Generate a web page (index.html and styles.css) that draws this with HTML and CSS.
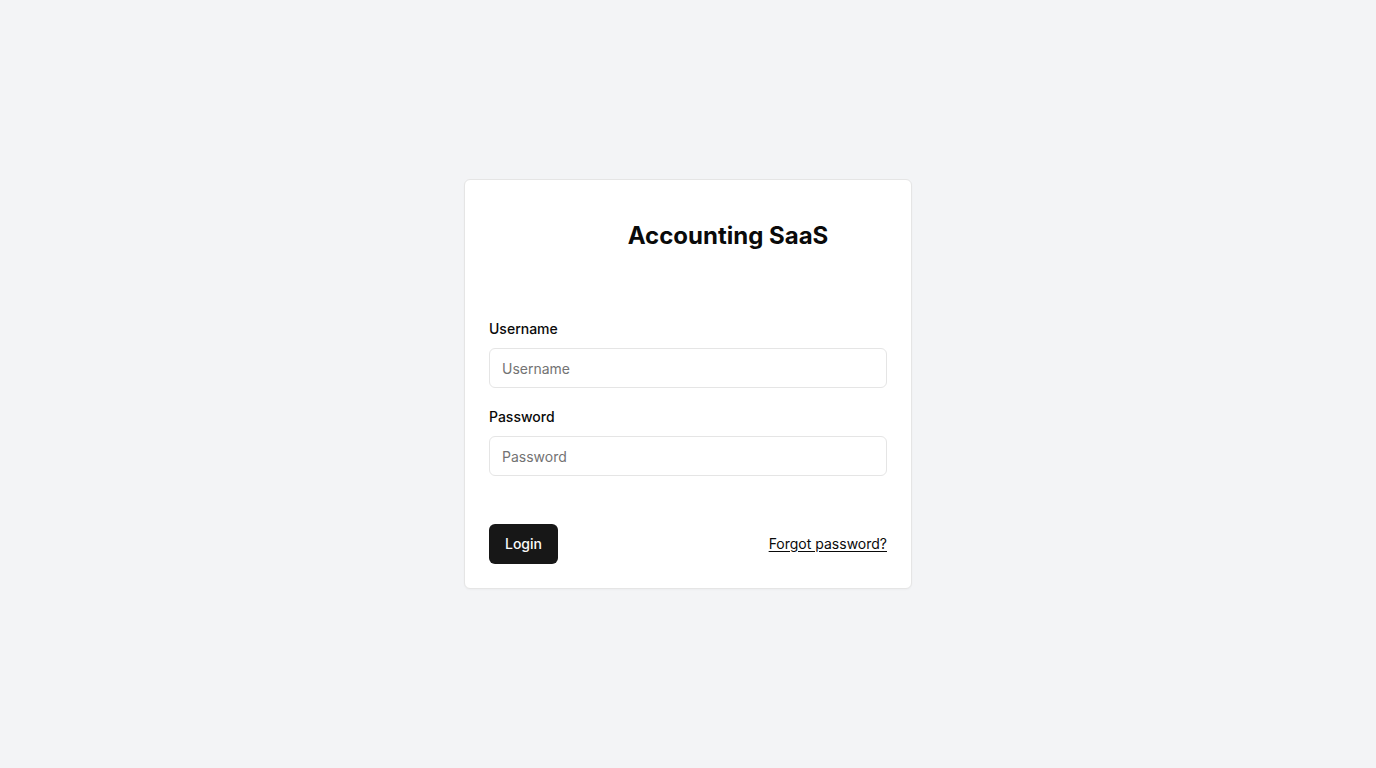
FILE: index.html
```html
<!DOCTYPE html>
<html lang="en">
<head>
<meta charset="utf-8">
<title>Accounting SaaS - Login</title>
<link rel="stylesheet" href="styles.css">
</head>
<body>
<main class="page">
  <form class="card">
    <div class="brand">
      <div class="logo-space"></div>
      <h1 class="title">Accounting SaaS</h1>
    </div>
    <div class="fields">
      <div class="field">
        <label class="label" for="username">Username</label>
        <input class="input" id="username" type="text" placeholder="Username">
      </div>
      <div class="field">
        <label class="label" for="password">Password</label>
        <input class="input" id="password" type="password" placeholder="Password">
      </div>
    </div>
    <div class="actions">
      <button class="btn" type="button">Login</button>
      <a class="link" href="#">Forgot password?</a>
    </div>
  </form>
</main>
</body>
</html>
```
FILE: styles.css
```css
* { box-sizing: border-box; }
html, body { margin: 0; padding: 0; }
body {
  font-family: Inter, "Liberation Sans", sans-serif;
  background: #f3f4f6;
  color: #0a0a0a;
}
.page {
  min-height: 100vh;
  display: flex;
  align-items: center;
  justify-content: center;
}
.card {
  width: 448px;
  background: #fff;
  border: 1px solid #e5e5e5;
  border-radius: 6px;
  padding: 24px;
  box-shadow: 0 1px 2px rgba(0,0,0,0.03);
}
.brand {
  height: 64px;
  display: flex;
  align-items: center;
  justify-content: center;
  gap: 16px;
}
.logo-space { width: 64px; height: 64px; }
.title {
  margin: 0;
  font-size: 24px;
  line-height: 32px;
  font-weight: 700;
  color: #0a0a0a;
}
.fields {
  margin-top: 50px;
  display: flex;
  flex-direction: column;
  gap: 18px;
}
.field { display: flex; flex-direction: column; }
.label {
  font-size: 14px;
  line-height: 20px;
  font-weight: 500;
  margin-top: 1px;
  margin-bottom: 9px;
  color: #0a0a0a;
}
.input {
  height: 40px;
  width: 100%;
  border: 1px solid #e5e5e5;
  border-radius: 6px;
  padding: 0 12px;
  font-family: inherit;
  font-size: 14px;
  color: #0a0a0a;
  background: #fff;
  outline: none;
}
.input::placeholder { color: #737373; }
.actions {
  margin-top: 48px;
  display: flex;
  align-items: center;
  justify-content: space-between;
}
.btn {
  height: 40px;
  padding: 0 16px;
  border: none;
  border-radius: 6px;
  background: #171717;
  color: #fafafa;
  font-family: inherit;
  font-size: 14px;
  line-height: 20px;
  font-weight: 500;
  cursor: pointer;
}
.link {
  display: block;
  font-size: 14px;
  line-height: 20px;
  color: #0a0a0a;
  text-decoration: underline;
  text-underline-offset: 2px;
}
```
